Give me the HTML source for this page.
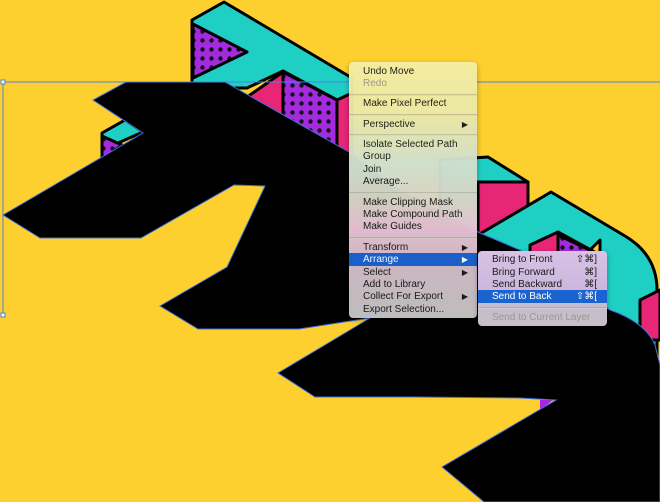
<!DOCTYPE html>
<html><head><style>
html,body{margin:0;padding:0;width:660px;height:502px;overflow:hidden;background:#fed02f;font-family:"Liberation Sans",sans-serif}
svg{position:absolute;left:0;top:0}
.menu{position:absolute;border-radius:4px;box-shadow:0 2px 6px rgba(0,0,0,.35);font-size:10px;color:#1a1a1a;}
.m1{left:349px;top:62px;width:128px;height:256px;background:linear-gradient(180deg,#f4eda2 0%,#ece8a6 20%,#cfe0cf 40%,#d8d3c6 55%,#e8c2d4 65%,#d4bcc8 78%,#c4c4c4 100%);opacity:.97}
.m2{left:478px;top:251px;width:129px;height:75px;background:linear-gradient(180deg,#d8c2e6,#cbb8dc 50%,#c5c0c5);}
.it{position:absolute;left:0;right:0;height:13px;line-height:13px;padding-left:14px;box-sizing:border-box;white-space:nowrap}
.dis{color:#9a9a8a}
.hl{background:#1b64cf;color:#fff}
.sep{position:absolute;left:0;right:0;height:1px;background:rgba(150,150,130,.45);border-bottom:1px solid rgba(255,255,255,.4)}
.ar{position:absolute;right:9px;top:0;font-size:8px}
.sc{position:absolute;right:10px;top:0}
</style></head><body>
<svg width="660" height="502" viewBox="0 0 660 502">
<defs><pattern id="dots" width="9" height="9" patternUnits="userSpaceOnUse"><rect width="9" height="9" fill="#a42ae0"/><circle cx="4.5" cy="4.5" r="2.2" fill="#111"/></pattern></defs>
<g stroke="#000" stroke-width="3" stroke-linejoin="round">
<polygon points="192,20 224,2 352,78 352,96 337,100 283,71 247,88 192,88" fill="#20cfc4"/>
<polygon points="193,24 247,52 193,78" fill="url(#dots)"/>
<polygon points="247,97 283,72 283,160 247,160" fill="#e82676"/>
<polygon points="283,72 337,100 337,160 283,160" fill="url(#dots)"/>
<polygon points="337,100 352,93 352,160 337,160" fill="#e82676"/>
<polygon points="102,133 125,120 143,132 102,150" fill="#20cfc4"/>
<polygon points="102,136 122,145 102,160" fill="url(#dots)"/>
<polygon points="440,160 488,157 528,182 528,240 440,240" fill="#20cfc4"/>
<polygon points="478,182 528,182 528,208 478,235" fill="#e82676"/>
<path d="M478,235 L551,192 L625,236 Q657,255 657,290 L657,380 L600,380 L600,240 L540,300 L478,300 Z" fill="#20cfc4"/>
<polygon points="530,245 558,232 600,255 600,320 530,320" fill="#e82676"/>
<polygon points="558,235 600,255 600,300 558,300" fill="url(#dots)"/>
<polygon points="640,300 660,290 660,340 640,340" fill="#e82676"/>
</g>
<path d="M126,82 L225,82 L349,152 L400,190 L480,233 L520,250 L610,310 Q645,322 655,345 L660,365 L660,502 L484,502 L442,467 L556,400 L520,398 L415,397 L315,397 L278,373 L370,318 L299,329 L198,329 L160,306 L227,267 L265,186 L234,185 L141,238 L40,238 L3,215 L143,133 L93,100 Z" fill="#000" stroke="#3d6fe0" stroke-width="1"/>
<polygon points="540,400 553,400 540,410" fill="#a42ae0"/>
<line x1="3" y1="82" x2="660" y2="82" stroke="#4a80e8" stroke-width="1"/>
<line x1="3" y1="82" x2="3" y2="315" stroke="#4a80e8" stroke-width="1"/>
<rect x="1" y="80" width="4" height="4" fill="#fff" stroke="#4a80e8" stroke-width="1"/>
<rect x="1" y="313" width="4" height="4" fill="#fff" stroke="#4a80e8" stroke-width="1"/>
</svg>
<div class="menu m1">
<div class="it" style="top:3px">Undo Move</div>
<div class="it dis" style="top:15px">Redo</div>
<div class="sep" style="top:32px"></div>
<div class="it" style="top:35px">Make Pixel Perfect</div>
<div class="sep" style="top:52px"></div>
<div class="it" style="top:56px">Perspective<span class="ar">▶</span></div>
<div class="sep" style="top:72px"></div>
<div class="it" style="top:76px">Isolate Selected Path</div>
<div class="it" style="top:88px">Group</div>
<div class="it" style="top:101px">Join</div>
<div class="it" style="top:113px">Average...</div>
<div class="sep" style="top:130px"></div>
<div class="it" style="top:134px">Make Clipping Mask</div>
<div class="it" style="top:146px">Make Compound Path</div>
<div class="it" style="top:158px">Make Guides</div>
<div class="sep" style="top:175px"></div>
<div class="it" style="top:179px">Transform<span class="ar">▶</span></div>
<div class="it hl" style="top:191px">Arrange<span class="ar">▶</span></div>
<div class="it" style="top:204px">Select<span class="ar">▶</span></div>
<div class="it" style="top:216px">Add to Library</div>
<div class="it" style="top:228px">Collect For Export<span class="ar">▶</span></div>
<div class="it" style="top:241px">Export Selection...</div>
</div>
<div class="menu m2">
<div class="it" style="top:2px">Bring to Front<span class="sc">⇧⌘]</span></div>
<div class="it" style="top:15px">Bring Forward<span class="sc">⌘]</span></div>
<div class="it" style="top:27px">Send Backward<span class="sc">⌘[</span></div>
<div class="it hl" style="top:39px">Send to Back<span class="sc">⇧⌘[</span></div>
<div class="sep" style="top:56px"></div>
<div class="it dis" style="top:60px">Send to Current Layer</div>
</div>
</body></html>
